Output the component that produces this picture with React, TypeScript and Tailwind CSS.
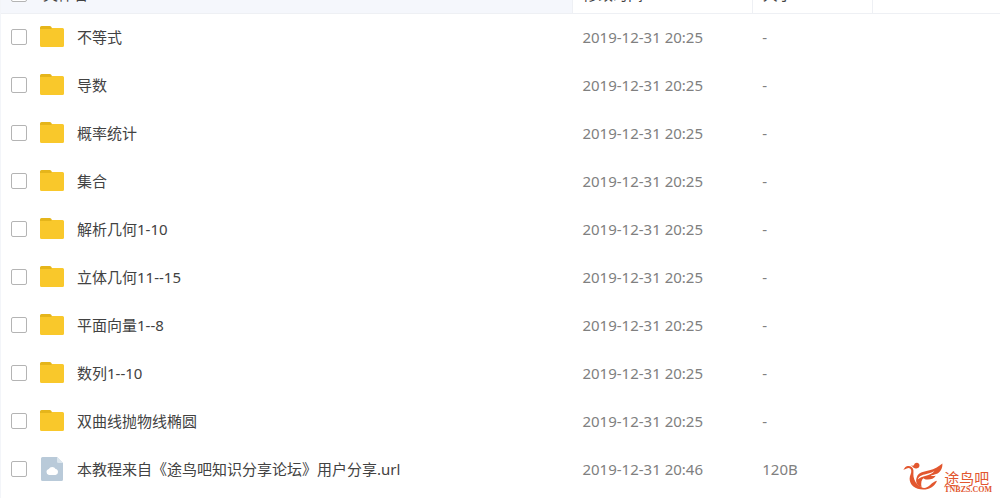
interface FileEntry {
  name: string;
  kind: "folder" | "link";
  modified: string;
  size: string;
}

const files: FileEntry[] = [
  { name: "不等式", kind: "folder", modified: "2019-12-31 20:25", size: "-" },
  { name: "导数", kind: "folder", modified: "2019-12-31 20:25", size: "-" },
  { name: "概率统计", kind: "folder", modified: "2019-12-31 20:25", size: "-" },
  { name: "集合", kind: "folder", modified: "2019-12-31 20:25", size: "-" },
  { name: "解析几何1-10", kind: "folder", modified: "2019-12-31 20:25", size: "-" },
  { name: "立体几何11--15", kind: "folder", modified: "2019-12-31 20:25", size: "-" },
  { name: "平面向量1--8", kind: "folder", modified: "2019-12-31 20:25", size: "-" },
  { name: "数列1--10", kind: "folder", modified: "2019-12-31 20:25", size: "-" },
  { name: "双曲线抛物线椭圆", kind: "folder", modified: "2019-12-31 20:25", size: "-" },
  {
    name: "本教程来自《途鸟吧知识分享论坛》用户分享.url",
    kind: "link",
    modified: "2019-12-31 20:46",
    size: "120B",
  },
];

function FolderIcon() {
  return (
    <svg className="size-6 shrink-0" viewBox="0 0 24 24" aria-hidden="true">
      <path d="M0 2.500A1.500 1.500 0 0 1 1.500 1h8.300c.6 0 1 .2 1.400.8L12.500 4H22v9H0z" fill="#e5b51b" />
      <path d="M0 4h11l1-1h10.500A1.500 1.500 0 0 1 24 4.500v16a1.500 1.500 0 0 1-1.500 1.500h-21A1.500 1.500 0 0 1 0 20.500z" fill="#f9c82b" />
    </svg>
  );
}

function LinkFileIcon() {
  return (
    <svg className="size-6 shrink-0" viewBox="0 0 24 24" aria-hidden="true">
      <path d="M2.500 0H17l6 6v16.500a1.500 1.500 0 0 1-1.500 1.500h-19A1.500 1.500 0 0 1 1 22.500v-21A1.500 1.500 0 0 1 2.500 0z" fill="#b9cad9" />
      <path d="M17 0l6 6h-4.500A1.500 1.500 0 0 1 17 4.500z" fill="#dce6ee" />
      <path d="M9 18a3 3 0 0 1-2.500-3c0-1.700 1-2.600 2.300-3a3.800 3.800 0 0 1 6.800.1c1.500.3 2.400 1.400 2.400 2.900a3 3 0 0 1-2.500 3z" fill="#fff" />
    </svg>
  );
}

function Checkbox({ label }: { label: string }) {
  return (
    <input
      type="checkbox"
      aria-label={label}
      className="block size-4 shrink-0 appearance-none rounded-xs border border-[#b4b4b4] bg-white checked:bg-blue-500"
    />
  );
}

function SiteLogo() {
  return (
    <div className="absolute right-2 bottom-1 flex items-start gap-px text-[#e2572f]">
      <svg className="h-7 w-10" viewBox="62 66 127 88" fill="currentColor" aria-hidden="true">
        {/* head, neck and the round belly */}
        <path d="M63 90C68 84 69 79 77 78C87 77 94 83 95 91C96 101 93 109 98 121C102 132 110 140 121 146C130 151 141 146 149 138C156 131 162 127 170 125C163 142 147 153 126 153C101 153 83 139 83 119C83 108 90 100 88 92C86 84 79 83 74 86C70 88 67 89 63 90Z" />
        {/* crest */}
        <path d="M88 76C92 78 95 78 97 75C99 67 109 66 113 72C117 80 111 87 103 86C97 86 94 83 92 80C90 79 89 78 88 76Z" />
        {/* wing */}
        <path d="M121 146C106 140 100 127 106 113C112 98 129 96 146 92C162 88 174 81 187 70C188 85 181 98 167 104C160 107 155 108 150 109C156 111 161 110 166 109C161 118 151 121 141 121C136 122 130 120 127 117C121 121 118 131 121 146Z" />
        <path d="M109 121C113 108 127 106 142 102C150 100 156 97 162 93C156 103 145 106 135 109C123 112 115 114 109 121Z" fill="#fff" />
      </svg>
      <div className="flex flex-col pt-2">
        <span className="font-['Noto_Sans_CJK_SC',sans-serif] text-[15px] leading-4">途鸟吧</span>
        <span className="font-['Liberation_Serif',serif] text-[8px] leading-2 font-bold">TNBZS.COM</span>
      </div>
    </div>
  );
}

export default function App() {
  return (
    <main className="relative min-h-screen overflow-hidden border-l border-[#f3f5f9] bg-white font-['Noto_Sans','Noto_Sans_CJK_SC',sans-serif] text-[15px] leading-5 text-[#424242]">
      <table className="-mt-[23px] w-full table-fixed border-collapse text-left">
        <colgroup>
          <col />
          <col className="w-[18%]" />
          <col className="w-[12%]" />
          <col className="w-[12.8%]" />
        </colgroup>
        <thead>
          <tr className="h-9 border-b border-[#eef0f4]">
            <th className="border-r border-[#eef0f4] bg-[#f5f7fc] p-0 pb-0.5 pl-2.5 font-normal">
              <div className="flex items-center gap-4">
                <Checkbox label="全选" />
                文件名
              </div>
            </th>
            <th className="border-r border-[#eef0f4] p-0 pb-0.5 pl-2.5 font-normal">修改时间</th>
            <th className="border-r border-[#eef0f4] p-0 pb-0.5 pl-2.5 font-normal">大小</th>
            <th className="p-0" />
          </tr>
        </thead>
        <tbody>
          {files.map((file) => (
            <tr key={file.name} className="h-12 hover:bg-[#f5f7fc]">
              <td className="p-0 pl-2.5">
                <div className="flex items-center gap-[13px] whitespace-nowrap">
                  <Checkbox label={file.name} />
                  {file.kind === "folder" ? <FolderIcon /> : <LinkFileIcon />}
                  <span>{file.name}</span>
                </div>
              </td>
              <td className="p-0 pl-2.5 whitespace-nowrap text-[#808080]">{file.modified}</td>
              <td className="p-0 pl-2.5 text-[#808080]">{file.size}</td>
              <td className="p-0" />
            </tr>
          ))}
        </tbody>
      </table>
      <SiteLogo />
    </main>
  );
}
